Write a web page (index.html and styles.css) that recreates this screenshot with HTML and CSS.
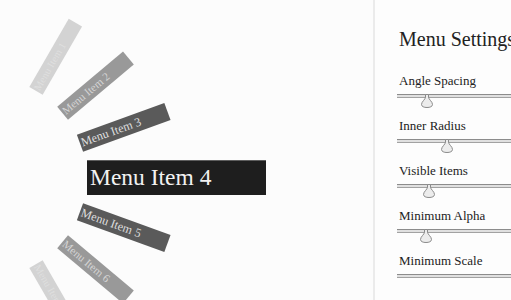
FILE: index.html
```html
<!DOCTYPE html>
<html>
<head>
<meta charset="utf-8">
<link rel="stylesheet" href="styles.css">
</head>
<body>
<div class="app">
  <div class="canvas">
    <div class="item i1">Menu Item 1</div>
    <div class="item i2">Menu Item 2</div>
    <div class="item i3">Menu Item 3</div>
    <div class="item i4">Menu Item 4</div>
    <div class="item i5">Menu Item 5</div>
    <div class="item i6">Menu Item 6</div>
    <div class="item i7">Menu Item 7</div>
  </div>
  <div class="panel">
    <h1 class="title">Menu Settings</h1>
    <div class="group">
      <div class="label">Angle Spacing</div>
      <div class="slider"><div class="track"></div><svg class="thumb" style="left:22px" viewBox="0 0 12 14" width="12" height="14"><path d="M4.5 0.5 L7.5 0.5 L7.5 3 C7.5 5.5 11.5 7.5 11.5 10.5 C11.5 12.5 9 13.5 6 13.5 C3 13.5 0.5 12.5 0.5 10.5 C0.5 7.5 4.5 5.5 4.5 3 Z"/></svg></div>
    </div>
    <div class="group">
      <div class="label">Inner Radius</div>
      <div class="slider"><div class="track"></div><svg class="thumb" style="left:42px" viewBox="0 0 12 14" width="12" height="14"><path d="M4.5 0.5 L7.5 0.5 L7.5 3 C7.5 5.5 11.5 7.5 11.5 10.5 C11.5 12.5 9 13.5 6 13.5 C3 13.5 0.5 12.5 0.5 10.5 C0.5 7.5 4.5 5.5 4.5 3 Z"/></svg></div>
    </div>
    <div class="group">
      <div class="label">Visible Items</div>
      <div class="slider"><div class="track"></div><svg class="thumb" style="left:24px" viewBox="0 0 12 14" width="12" height="14"><path d="M4.5 0.5 L7.5 0.5 L7.5 3 C7.5 5.5 11.5 7.5 11.5 10.5 C11.5 12.5 9 13.5 6 13.5 C3 13.5 0.5 12.5 0.5 10.5 C0.5 7.5 4.5 5.5 4.5 3 Z"/></svg></div>
    </div>
    <div class="group">
      <div class="label">Minimum Alpha</div>
      <div class="slider"><div class="track"></div><svg class="thumb" style="left:21px" viewBox="0 0 12 14" width="12" height="14"><path d="M4.5 0.5 L7.5 0.5 L7.5 3 C7.5 5.5 11.5 7.5 11.5 10.5 C11.5 12.5 9 13.5 6 13.5 C3 13.5 0.5 12.5 0.5 10.5 C0.5 7.5 4.5 5.5 4.5 3 Z"/></svg></div>
    </div>
    <div class="group">
      <div class="label">Minimum Scale</div>
      <div class="slider"><div class="track"></div><svg class="thumb" style="left:130px" viewBox="0 0 12 14" width="12" height="14"><path d="M4.5 0.5 L7.5 0.5 L7.5 3 C7.5 5.5 11.5 7.5 11.5 10.5 C11.5 12.5 9 13.5 6 13.5 C3 13.5 0.5 12.5 0.5 10.5 C0.5 7.5 4.5 5.5 4.5 3 Z"/></svg></div>
    </div>
  </div>
</div>
</body>
</html>
```

FILE: styles.css
```css
html, body {
  margin: 0;
  padding: 0;
  background: #fcfcfc;
}
.app {
  display: flex;
  width: 511px;
  height: 300px;
  overflow: hidden;
  font-family: "Liberation Serif", "Times New Roman", serif;
}
.canvas {
  position: relative;
  width: 373px;
  flex: none;
  height: 300px;
  overflow: hidden;
  background: #fcfcfc;
}
.item {
  position: absolute;
  left: -14px;
  top: 160px;
  width: 176px;
  height: 35px;
  line-height: 35px;
  padding-left: 3px;
  font-size: 23.5px;
  white-space: nowrap;
  transform-origin: 0 50%;
  color: #f2f2f2;
  background: #1e1e1e;
}
.i4 {
  transform: translateX(101px);
  box-shadow: inset 0 1px 0 #5e5e5e;
}
.i3 { transform: rotate(-20deg) translateX(100px) scale(0.52); background: #5a5a5a; color: #dedede; }
.i5 { transform: rotate(20deg) translateX(100px) scale(0.52); background: #5a5a5a; color: #dedede; }
.i2 { transform: rotate(-40deg) translateX(100px) scale(0.48); background: #999999; color: #d4d4d4; }
.i6 { transform: rotate(40deg) translateX(100px) scale(0.48); background: #999999; color: #d4d4d4; }
.i1 { transform: rotate(-60deg) translateX(100px) scale(0.44); background: #d3d3d3; color: #dfdfdf; }
.i7 { transform: rotate(60deg) translateX(100px) scale(0.44); background: #d3d3d3; color: #dfdfdf; }

.panel {
  flex: none;
  width: 112px;
  height: 300px;
  border-left: 2px solid #ebebeb;
  padding: 27px 0 0 24px;
  background: #fdfdfd;
  overflow: hidden;
  color: #222;
}
.title {
  margin: 0 0 22px 0;
  font-size: 20px;
  line-height: 24px;
  font-weight: normal;
  white-space: nowrap;
}
.group {
  height: 45px;
}
.label {
  font-size: 13px;
  line-height: 16px;
  white-space: nowrap;
}
.slider {
  position: relative;
  margin-top: 5px;
  height: 14px;
}
.track {
  margin-left: -2px;
  width: 160px;
  height: 2px;
  border-top: 1px solid #8c8c8c;
  border-bottom: 1px solid #a2a2a2;
  background: #e0e0e0;
}
.thumb {
  position: absolute;
  top: 0;
  fill: #ececec;
  stroke: #8a8a8a;
  stroke-width: 1;
}
```
